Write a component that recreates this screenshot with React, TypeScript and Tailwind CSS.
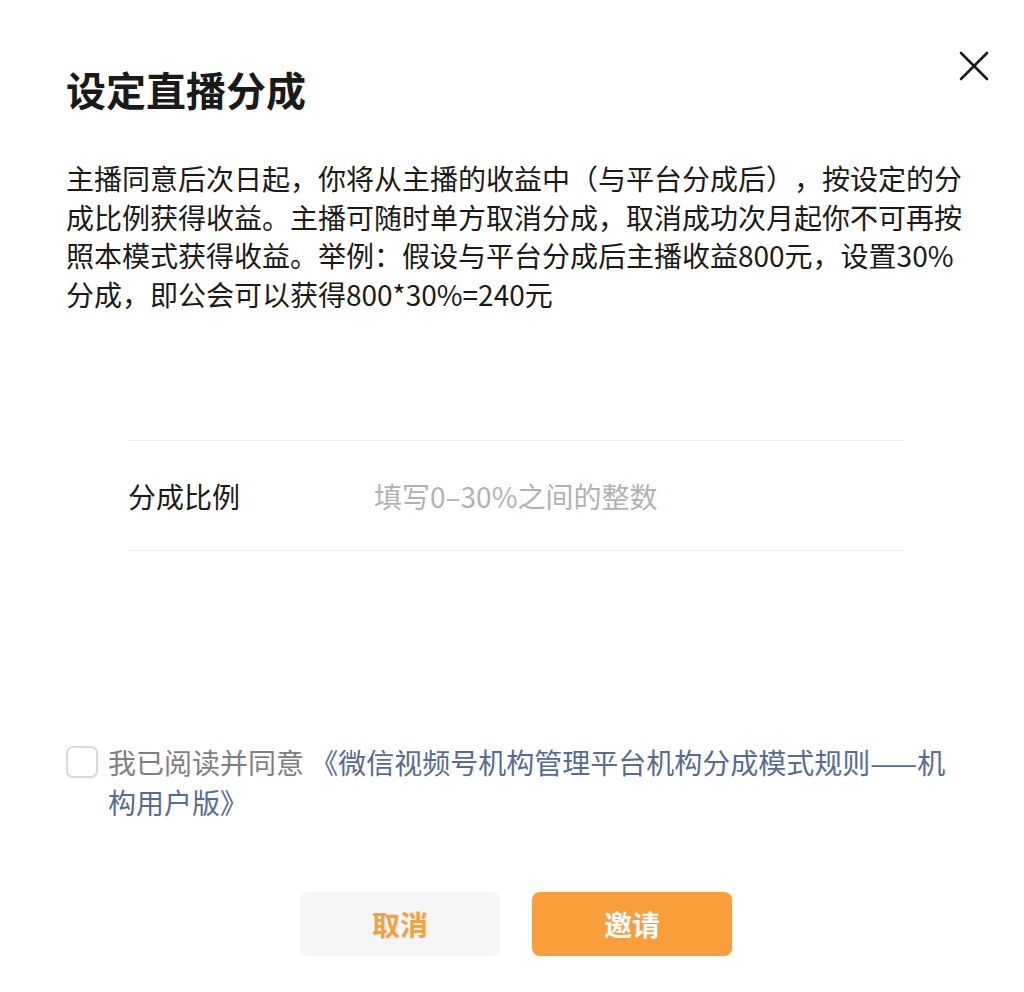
import { useState } from 'react';

const font = { fontFamily: "'Noto Sans CJK SC', 'Noto Sans', sans-serif" };

function CloseIcon() {
  return (
    <svg width="30" height="30" viewBox="0 0 30 30" fill="none" stroke="#1a1a1a" strokeWidth="2.6" strokeLinecap="round">
      <path d="M2 2L28 28" />
      <path d="M28 2L2 28" />
    </svg>
  );
}

export default function App() {
  const [agreed, setAgreed] = useState(false);
  const [ratio, setRatio] = useState('');

  return (
    <div className="w-[1024px] h-[992px] overflow-hidden bg-white" style={font}>
      <div className="relative w-[1032px] px-[66px] pt-[61px] [text-spacing-trim:space-all]">
        {/* close */}
        <button className="absolute top-[51px] right-[43px] p-0">
          <CloseIcon />
        </button>

        <h1 className="text-[40px] leading-[56px] font-semibold text-[#1a1a1a]">设定直播分成</h1>

        <p className="mt-[42px] text-[28px] leading-[38.5px] text-[#1a1a1a]">
          主播同意后次日起，你将从主播的收益中（与平台分成后），按设定的分成比例获得收益。主播可随时单方取消分成，取消成功次月起你不可再按照本模式获得收益。举例：假设与平台分成后主播收益800元，设置30%分成，即公会可以获得800*30%=240元
        </p>

        {/* ratio field */}
        <div className="mt-[127px] mx-[62px] flex items-center h-[111px] border-y border-[#ededed]">
          <div className="w-[246px] shrink-0 text-[28px] text-[#1a1a1a]">分成比例</div>
          <input
            value={ratio}
            onChange={(e) => setRatio(e.target.value)}
            placeholder="填写0–30%之间的整数"
            className="flex-1 text-[28px] text-[#1a1a1a] outline-none bg-transparent placeholder:text-[#b2b2b2]"
          />
        </div>

        {/* agreement */}
        <div className="mt-[191px] flex items-start gap-[10px]">
          <button
            onClick={() => setAgreed(!agreed)}
            className={
              agreed
                ? 'mt-[4px] w-[32px] h-[32px] shrink-0 rounded-[7px] bg-[#fa9d3b] border-2 border-[#fa9d3b]'
                : 'mt-[4px] w-[32px] h-[32px] shrink-0 rounded-[7px] border-2 border-[#d9d9d9]'
            }
          />
          <p className="text-[28px] leading-[40px] text-[#7f7f7f]">
            我已阅读并同意 <span className="text-[#576b95]">《微信视频号机构管理平台机构分成模式规则——机构用户版》</span>
          </p>
        </div>

        {/* actions */}
        <div className="mt-[70px] flex justify-center gap-[32px]">
          <button className="w-[200px] h-[64px] rounded-[8px] bg-[#f5f6f7] text-[#fa9d3b] text-[28px] font-semibold">
            取消
          </button>
          <button className="w-[200px] h-[64px] rounded-[8px] bg-[#fa9d3b] text-white text-[28px] font-semibold">
            邀请
          </button>
        </div>
      </div>
    </div>
  );
}
